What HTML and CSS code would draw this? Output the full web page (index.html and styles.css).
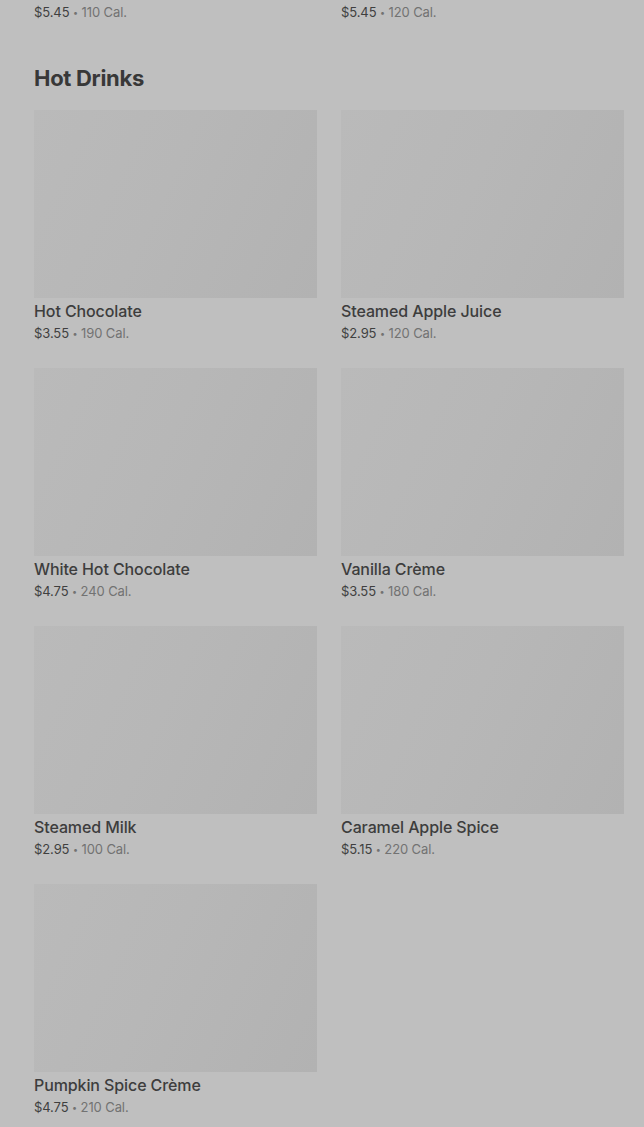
FILE: index.html
```html
<!DOCTYPE html>
<html lang="en">

<head>
    <meta charset="UTF-8">
    <meta name="viewport" content="width=device-width, initial-scale=1.0">
    <title>Menu</title>
    <link rel="stylesheet" href="styles.css">
</head>

<body>
    <div class="menu">
        <!-- tail of the previous section, scrolled past -->
        <div class="grid top-row">
            <p class="meta"><span class="price">$5.45</span> <span class="dot">•</span> 110 Cal.</p>
            <p class="meta"><span class="price">$5.45</span> <span class="dot">•</span> 120 Cal.</p>
        </div>

        <section class="section">
            <h2 class="section-title">Hot Drinks</h2>
            <div class="grid">
                <div class="item">
                    <div class="thumb"></div>
                    <p class="name">Hot Chocolate</p>
                    <p class="meta"><span class="price">$3.55</span> <span class="dot">•</span> 190 Cal.</p>
                </div>
                <div class="item">
                    <div class="thumb"></div>
                    <p class="name">Steamed Apple Juice</p>
                    <p class="meta"><span class="price">$2.95</span> <span class="dot">•</span> 120 Cal.</p>
                </div>
                <div class="item">
                    <div class="thumb"></div>
                    <p class="name">White Hot Chocolate</p>
                    <p class="meta"><span class="price">$4.75</span> <span class="dot">•</span> 240 Cal.</p>
                </div>
                <div class="item">
                    <div class="thumb"></div>
                    <p class="name">Vanilla Crème</p>
                    <p class="meta"><span class="price">$3.55</span> <span class="dot">•</span> 180 Cal.</p>
                </div>
                <div class="item">
                    <div class="thumb"></div>
                    <p class="name">Steamed Milk</p>
                    <p class="meta"><span class="price">$2.95</span> <span class="dot">•</span> 100 Cal.</p>
                </div>
                <div class="item">
                    <div class="thumb"></div>
                    <p class="name">Caramel Apple Spice</p>
                    <p class="meta"><span class="price">$5.15</span> <span class="dot">•</span> 220 Cal.</p>
                </div>
                <div class="item">
                    <div class="thumb"></div>
                    <p class="name">Pumpkin Spice Crème</p>
                    <p class="meta"><span class="price">$4.75</span> <span class="dot">•</span> 210 Cal.</p>
                </div>
            </div>
        </section>
    </div>
</body>

</html>
```

FILE: styles.css
```css
body {
    margin: 0;
    background: #bfbfbf;
    font-family: Inter, "Noto Sans", sans-serif;
    color: #3b3b3b;
    overflow: hidden;
}

.menu {
    padding: 1px 20px 0 34px;
}

.grid {
    display: grid;
    grid-template-columns: 283px 283px;
    column-gap: 24px;
    row-gap: 24px;
}

.top-row {
    row-gap: 0;
}

.section-title {
    margin: 41px 0 18px;
    font-size: 22px;
    line-height: 28px;
    font-weight: 700;
    letter-spacing: -0.3px;
    color: #383838;
}

.thumb {
    height: 188px;
    background: linear-gradient(115deg, #bababa 0%, #b7b7b7 45%, #b2b2b2 100%);
}

.name {
    margin: 2px 0 0;
    font-size: 16px;
    line-height: 22px;
    font-weight: 500;
    letter-spacing: -0.1px;
    color: #3d3d3d;
}

.meta {
    height: 21px;
    margin: 1px 0 0;
    font-size: 13px;
    line-height: 21px;
    letter-spacing: -0.1px;
    color: #727272;
}

.top-row .meta {
    height: 22px;
    margin-top: 0;
    line-height: 22px;
}

.price {
    color: #3f3f3f;
}

.dot {
    position: relative;
    top: -1px;
    font-size: 9px;
    line-height: 0;
}
```
